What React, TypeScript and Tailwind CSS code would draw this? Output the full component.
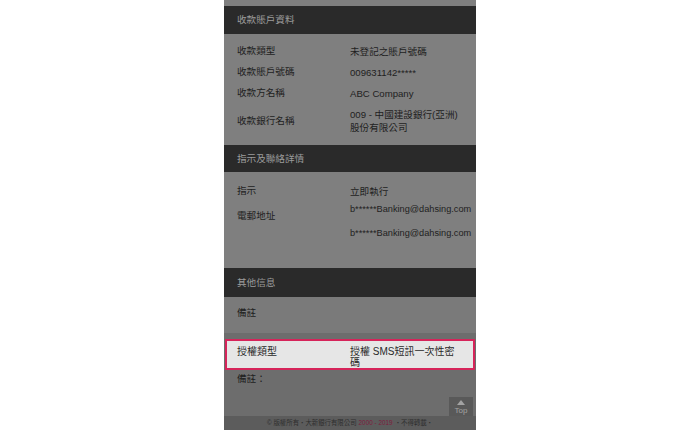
import React from "react";

const font = { fontFamily: '"Liberation Sans", "Noto Sans CJK TC", sans-serif' };

function Header({ title, h }: { title: string; h: string }) {
  return (
    <div className={`${h} bg-[#2a2a2a] flex items-center pl-[13px] pt-[1px] text-[#9c9c9c] text-[9.6px]`}>
      {title}
    </div>
  );
}

function Row({ label, value, h = "h-[21px]" }: { label: string; value: React.ReactNode; h?: string }) {
  return (
    <div className={`flex items-center ${h}`}>
      <div className="w-[126px] pl-[13px] shrink-0">{label}</div>
      <div className="whitespace-nowrap leading-[13px]">{value}</div>
    </div>
  );
}

export default function App() {
  return (
    <div className="w-[700px] h-[430px] bg-white overflow-hidden" style={font}>
      <div className="mx-auto w-[252px] h-[430px] flex flex-col text-[9.6px] text-[#1e1e1e] overflow-hidden">
        <div className="h-[6px] bg-[#7f7f7f]" />
        <Header title="收款賬戶資料" h="h-[28px]" />
        <div className="bg-[#7f7f7f] pt-[7px] pb-[7px]">
          <Row label="收款類型" value="未登記之賬戶號碼" />
          <Row label="收款賬戶號碼" value="009631142*****" />
          <Row label="收款方名稱" value="ABC Company" />
          <Row
            label="收款銀行名稱"
            h="h-[34px]"
            value={
              <>
                009 - 中國建設銀行(亞洲)
                <br />
                股份有限公司
              </>
            }
          />
        </div>
        <Header title="指示及聯絡詳情" h="h-[27px]" />
        <div className="bg-[#7f7f7f] h-[96px] pt-[9px]">
          <Row label="指示" value="立即執行" h="h-[20px]" />
          <div className="flex">
            <div className="w-[126px] pl-[13px] shrink-0 mt-[6px] h-[18px] flex items-center">電郵地址</div>
            <div className="whitespace-nowrap text-[9.2px]">
              <div className="h-[18px] flex items-center">b******Banking@dahsing.com</div>
              <div className="h-[18px] mt-[6px] flex items-center">b******Banking@dahsing.com</div>
            </div>
          </div>
        </div>
        <Header title="其他信息" h="h-[29px]" />
        <div className="bg-[#7a7a7a] h-[36px] flex items-center pl-[13px] pb-[3px]">備註</div>
        <div className="bg-[#6d6d6d] h-[83px] flex flex-col pt-[6px]">
          <div className="mx-[1px] h-[33px] border-2 border-[#d6245a] bg-[#e6e6e6] flex pt-[5px] text-[#2a2a2a] text-[10px] leading-[11px]">
            <div className="w-[123px] pl-[10px] shrink-0">授權類型</div>
            <div className="whitespace-nowrap">
              授權 SMS短訊一次性密
              <br />碼
            </div>
          </div>
          <div className="pl-[13px] h-[12px] mt-[3px] leading-[12px] flex items-center">備註：</div>
          <div className="flex justify-end pr-[3px] mt-[12px]">
            <div className="w-[24px] h-[21px] bg-[#595959] flex flex-col items-center pt-[3px]">
              <div className="w-0 h-0 border-l-[4px] border-r-[4px] border-b-[5px] border-l-transparent border-r-transparent border-b-[#a3a3a3]" />
              <div className="text-[8px] leading-[10px] text-[#a3a3a3] mt-[1px]">Top</div>
            </div>
          </div>
        </div>
        <div className="h-[14px] bg-[#5c5c5c] flex items-center justify-center text-[6.4px] text-[#2e2e2e] whitespace-nowrap">
          © 版權所有・大新銀行有限公司 <span className="text-[#7c1c3c] mx-[2px]">2000 - 2019</span> ・不得轉載・
        </div>
      </div>
    </div>
  );
}
